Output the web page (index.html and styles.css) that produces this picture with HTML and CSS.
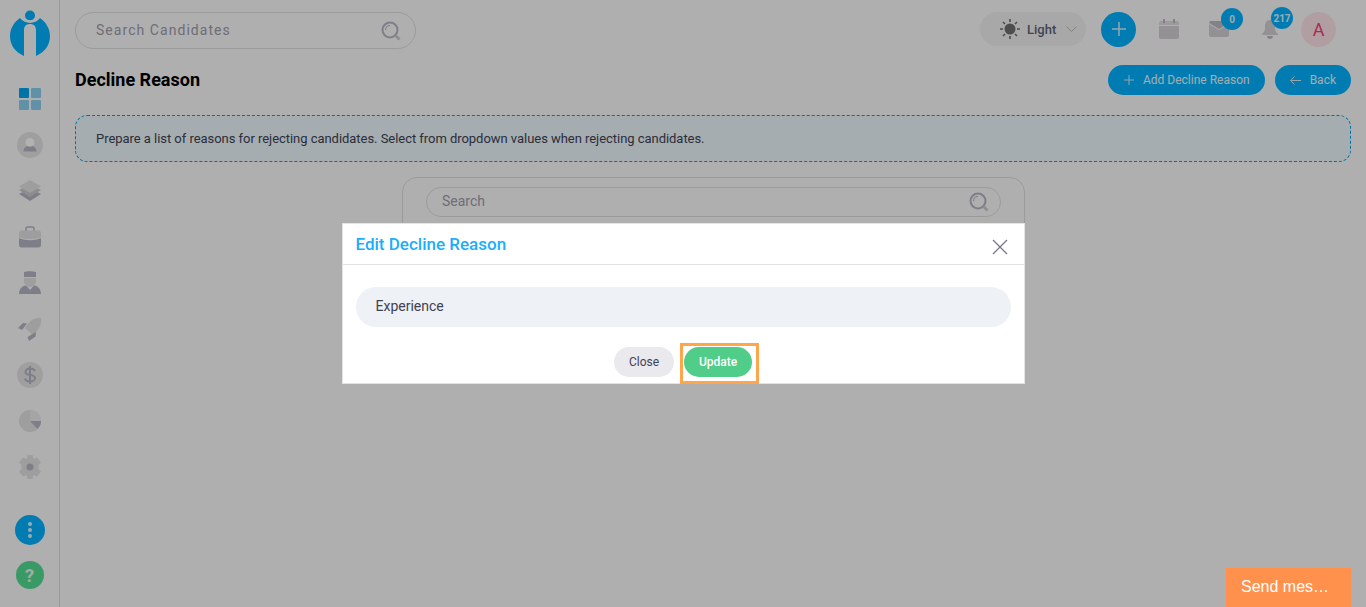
FILE: index.html
```html
<!DOCTYPE html>
<html lang="en">
<head>
  <meta charset="UTF-8" />
  <title>Decline Reason</title>
  <link rel="stylesheet" href="styles.css">
</head>
<body>
  <div class="app">
    <aside class="sidebar">
      <svg class="logo" width="40" height="46" viewBox="0 0 40 46">
        <path fill="#00b2ff" d="M10 8 C14 14 25 15 30 8 C36 12 40 19 40 26 C40 35 35 42 26 46 L26 20 C26 16 23.500 14 20 14 C16.500 14 14 16 14 20 L14 46 C5 42 0 35 0 26 C0 19 4 12 10 8 Z"/>
        <circle cx="20" cy="5.500" r="5" fill="#00b2ff"/>
        <path fill="none" stroke="#fbfbfb" stroke-width="1.500" d="M13 8 C17 12 23 12 27 8"/>
      </svg>
      <nav class="nav">
        <a class="nav-item">
          <svg width="24" height="24" viewBox="0 0 24 24">
            <rect x="1" y="1" width="10" height="10" rx="1" fill="#00a7ee"/>
            <rect x="13" y="1" width="10" height="10" rx="1" fill="#8cd0ee"/>
            <rect x="1" y="13" width="10" height="10" rx="1" fill="#8cd0ee"/>
            <rect x="13" y="13" width="10" height="10" rx="1" fill="#8cd0ee"/>
          </svg>
        </a>
        <a class="nav-item">
          <svg width="26" height="26" viewBox="0 0 26 26">
            <circle cx="13" cy="13" r="13" fill="#e4e4e4"/>
            <circle cx="13" cy="10.500" r="4.500" fill="#fff"/>
            <path fill="#b5b5c5" d="M6.500 19.500 C6.500 16 9 14.500 10.500 14 C12 15 14 15 15.500 14 C17 14.500 19.500 16 19.500 19.500 Z"/>
          </svg>
        </a>
        <a class="nav-item">
          <svg width="24" height="24" viewBox="0 0 24 24">
            <path fill="#b5b5c5" d="M1 15 L5 13 L12 16 L19 13 L23 15 L12 22 Z"/>
            <path fill="#cacad0" d="M1 11 L5 9 L12 12 L19 9 L23 11 L12 18 Z"/>
            <path fill="#e2e2e2" d="M1 7.500 L12 1 L23 7.500 L12 14 Z"/>
          </svg>
        </a>
        <a class="nav-item">
          <svg width="24" height="24" viewBox="0 0 24 24">
            <path fill="none" stroke="#b5b5c5" stroke-width="1.500" d="M8 6 V3.500 C8 2.500 9 2 10 2 H14 C15 2 16 2.500 16 3.500 V6"/>
            <path fill="#e2e2e2" d="M1 8 C1 6.500 2 5.500 3.500 5.500 H20.500 C22 5.500 23 6.500 23 8 V12 C16 15 8 15 1 12 Z"/>
            <path fill="#b5b5c5" d="M1 13 C8 16 16 16 23 13 V20 C23 21.500 22 22.500 20.500 22.500 H3.500 C2 22.500 1 21.500 1 20 Z"/>
          </svg>
        </a>
        <a class="nav-item">
          <svg width="24" height="24" viewBox="0 0 24 24">
            <path fill="#e2e2e2" d="M6 7 H18 V10 C18 13 15 16 12 16 C9 16 6 13 6 10 Z"/>
            <path fill="#b5b5c5" d="M6 1 C9 0 15 0 18 1 V6 H6 Z"/>
            <path fill="#b5b5c5" d="M1 23 C1 18 4 15 8 14.500 L12 19 L16 14.500 C20 15 23 18 23 23 Z"/>
          </svg>
        </a>
        <a class="nav-item">
          <svg width="24" height="24" viewBox="0 0 24 24">
            <path fill="#e2e2e2" d="M23 1 C24 7 21 13 15 18 L7 11 C11 4 17 0 23 1 Z"/>
            <path fill="#b5b5c5" d="M5 6 L9 6.500 L4 13 L0 11 Z"/>
            <path fill="#b5b5c5" d="M18 15 L17.500 19.500 L11 24 L9.500 20 Z"/>
          </svg>
        </a>
        <a class="nav-item">
          <svg width="26" height="26" viewBox="0 0 26 26">
            <circle cx="13" cy="13" r="13" fill="#e4e4e4"/>
            <path fill="none" stroke="#b5b5c5" stroke-width="2" d="M18 9 C17 7 15 6.500 13 6.500 C10.500 6.500 8.500 8 8.500 10 C8.500 14.500 18 11.500 18 16 C18 18 15.500 19.500 13 19.500 C10.500 19.500 8.500 18.500 8 16.500 M13 4 V22"/>
          </svg>
        </a>
        <a class="nav-item">
          <svg width="22" height="22" viewBox="0 0 22 22">
            <circle cx="11" cy="11" r="11" fill="#e2e2e2"/>
            <path fill="#b5b5c5" d="M11 11 H22 C22 14 21 16.500 18.500 19 Z"/>
            <path fill="#ececec" d="M11 0 C17 0 22 5 22 11 H11 Z"/>
          </svg>
        </a>
        <a class="nav-item">
          <svg width="26" height="26" viewBox="0 0 26 26">
            <path fill="#e2e2e2" d="M10.500 1 H15.500 L16.500 5 L20 3.500 L24 8.500 L21.500 11 V15 L24 17.500 L20 22.500 L16.500 21 L15.500 25 H10.500 L9.500 21 L6 22.500 L2 17.500 L4.500 15 V11 L2 8.500 L6 3.500 L9.500 5 Z"/>
            <circle cx="13" cy="13" r="3.500" fill="#b5b5c5"/>
          </svg>
        </a>
      </nav>
      <div class="side-bottom">
        <a class="round-btn more"><span></span><span></span><span></span></a>
        <a class="round-btn help">?</a>
      </div>
    </aside>

    <main class="main">
      <header class="topbar">
        <div class="search-box top-search">
          <span class="search-text">Search Candidates</span>
          <svg class="search-icon" width="20" height="20" viewBox="0 0 20 20">
            <circle cx="9" cy="9" r="7.500" fill="none" stroke="#b5b5c5" stroke-width="2"/>
            <path fill="none" stroke="#b5b5c5" stroke-width="1.200" d="M4.500 9 C4.500 6.500 6.500 4.500 9 4.500"/>
            <path stroke="#ccc" stroke-width="3" d="M14.500 14.500 L18.500 18.500"/>
          </svg>
        </div>
        <div class="top-actions">
          <div class="theme-pill">
            <svg width="20" height="20" viewBox="0 0 20 20">
              <circle cx="10" cy="10" r="5.500" fill="#6f6f6f"/>
              <path stroke="#6f6f6f" stroke-width="1.600" d="M10 0 V3 M10 17 V20 M0 10 H3 M17 10 H20 M3 3 L5 5 M15 15 L17 17 M3 17 L5 15 M15 5 L17 3"/>
            </svg>
            <span class="theme-label">Light</span>
            <svg width="11" height="6" viewBox="0 0 11 6"><path fill="none" stroke="#bbb" d="M0.500 0.500 L5.500 5.500 L10.500 0.500"/></svg>
          </div>
          <a class="add-circle">
            <svg width="16" height="16" viewBox="0 0 16 16"><path stroke="#d6eefb" stroke-width="1.500" d="M8 1 V15 M1 8 H15"/></svg>
          </a>
          <a class="top-icon cal">
            <svg width="20" height="20" viewBox="0 0 20 20">
              <path fill="#e0dde0" d="M0 6 V4 C0 3 1 2 2 2 H18 C19 2 20 3 20 4 V6 Z"/>
              <path fill="#d4d0d6" d="M0 7 H20 V18 C20 19 19 20 18 20 H2 C1 20 0 19 0 18 Z"/>
              <path stroke="#aaa6b0" stroke-width="1.500" d="M5 0 V4 M15 0 V4"/>
            </svg>
          </a>
          <a class="top-icon mail">
            <svg width="20" height="16" viewBox="0 0 20 16">
              <path fill="#d4d0d6" d="M0 3 L10 9 L20 3 V14 C20 15 19 16 18 16 H2 C1 16 0 15 0 14 Z"/>
              <path fill="#bdb9c2" d="M1 0 H19 L20 2 L10 8 L0 2 Z"/>
            </svg>
            <span class="badge">0</span>
          </a>
          <a class="top-icon bell">
            <svg width="16" height="20" viewBox="0 0 16 20">
              <path fill="#d4d0d6" d="M8 1 C12 1 13 4 13 8 C13 12 14 13 16 15 V16 H0 V15 C2 13 3 12 3 8 C3 4 4 1 8 1 Z"/>
              <path fill="#bdb9c2" d="M5 17 H11 C11 19 9.500 20 8 20 C6.500 20 5 19 5 17 Z"/>
            </svg>
            <span class="badge">217</span>
          </a>
          <div class="avatar">A</div>
        </div>
      </header>

      <div class="page-head">
        <h1 class="page-title">Decline Reason</h1>
        <div class="page-actions">
          <a class="btn-blue btn-add">
            <svg width="10" height="10" viewBox="0 0 10 10"><path stroke="#d6eefb" d="M5 0 V10 M0 5 H10"/></svg>
            Add Decline Reason
          </a>
          <a class="btn-blue">
            <svg width="11" height="9" viewBox="0 0 11 9"><path fill="none" stroke="#d6eefb" d="M4.500 0.500 L0.700 4.500 L4.500 8.500 M0.700 4.500 H11"/></svg>
            Back
          </a>
        </div>
      </div>

      <div class="notice">Prepare a list of reasons for rejecting candidates. Select from dropdown values when rejecting candidates.</div>

      <section class="list-card">
        <div class="search-box card-search">
          <span class="search-text">Search</span>
          <svg class="search-icon" width="20" height="20" viewBox="0 0 20 20">
            <circle cx="9" cy="9" r="7.500" fill="none" stroke="#b5b5c5" stroke-width="2"/>
            <path fill="none" stroke="#b5b5c5" stroke-width="1.200" d="M4.500 9 C4.500 6.500 6.500 4.500 9 4.500"/>
            <path stroke="#ccc" stroke-width="3" d="M14.500 14.500 L18.500 18.500"/>
          </svg>
        </div>
      </section>
    </main>
  </div>

  <div class="overlay">
    <div class="modal">
      <div class="modal-head">
        <h2 class="modal-title">Edit Decline Reason</h2>
        <svg class="modal-x" width="16" height="16" viewBox="0 0 16 16"><path stroke="#77778a" stroke-width="1.300" d="M1 1 L15 15 M15 1 L1 15"/></svg>
      </div>
      <div class="modal-body">
        <div class="reason-input">Experience</div>
      </div>
      <div class="modal-foot">
        <a class="btn-close">Close</a>
        <span class="highlight"><a class="btn-update">Update</a></span>
      </div>
    </div>
  </div>

  <div class="chat-tab">Send mes…</div>
</body>
</html>
```

FILE: styles.css
```css
* {
  box-sizing: border-box;
}

body {
  margin: 0;
  height: 607px;
  overflow: hidden;
  background: #fbfbfb;
  font-family: Roboto, "Liberation Sans", sans-serif;
  color: #3f4254;
}

.app {
  display: flex;
  height: 607px;
}

/* sidebar */
.sidebar {
  width: 60px;
  flex-shrink: 0;
  display: flex;
  flex-direction: column;
  align-items: center;
  background: #fbfbfb;
  border-right: 1px solid #dcdcdc;
  padding-top: 10px;
}

.logo {
  display: block;
}

.nav {
  display: flex;
  flex-direction: column;
  align-items: center;
  margin-top: 20px;
}

.nav-item {
  height: 46px;
  width: 46px;
  display: flex;
  align-items: center;
  justify-content: center;
}

.side-bottom {
  display: flex;
  flex-direction: column;
  align-items: center;
  gap: 16px;
  margin-top: 25px;
}

.round-btn {
  display: flex;
  align-items: center;
  justify-content: center;
  border-radius: 50%;
}

.more {
  width: 30px;
  height: 30px;
  flex-direction: column;
  gap: 2px;
  background: #00b2ff;
}

.more span {
  width: 4px;
  height: 4px;
  border-radius: 50%;
  background: #dff3fd;
}

.help {
  width: 28px;
  height: 28px;
  background: #54dd93;
  color: #e6f8ee;
  font-size: 18px;
  font-weight: 700;
}

/* main column */
.main {
  flex: 1;
  min-width: 0;
  padding: 10px 15px 0;
}

.topbar {
  display: flex;
  align-items: center;
  justify-content: space-between;
  height: 38px;
}

.search-box {
  display: flex;
  align-items: center;
  justify-content: space-between;
  border: 1px solid #dedede;
  border-radius: 20px;
}

.top-search {
  width: 341px;
  height: 37px;
  padding: 0 14px 0 20px;
  margin-top: 3px;
}

.top-search .search-text {
  font-size: 14px;
  letter-spacing: 1.050px;
  padding-bottom: 2px;
}

.search-text {
  color: #9d9dad;
}

.top-actions {
  display: flex;
  align-items: center;
  padding-right: 15px;
}

.theme-pill {
  width: 106px;
  height: 34px;
  display: flex;
  align-items: center;
  padding-left: 20px;
  border-radius: 17px;
  background: #f1f1f1;
  margin-right: 15px;
}

.theme-label {
  font-size: 13px;
  font-weight: 500;
  color: #5e6278;
  margin: 0 10px 0 7px;
}

.add-circle {
  width: 35px;
  height: 35px;
  display: flex;
  align-items: center;
  justify-content: center;
  border-radius: 50%;
  background: #00b2ff;
  margin-right: 23px;
}

.top-icon {
  position: relative;
  display: flex;
}

.cal {
  margin-right: 30px;
}

.mail {
  margin-right: 33px;
}

.bell {
  margin-right: 23px;
}

.badge {
  position: absolute;
  top: -13px;
  left: 12px;
  min-width: 22px;
  height: 22px;
  display: flex;
  align-items: center;
  justify-content: center;
  border-radius: 50%;
  background: #00b2ff;
  color: #e3f5fd;
  font-size: 10px;
  font-weight: 700;
}

.bell .badge {
  top: -12px;
  left: 9px;
}

.avatar {
  width: 35px;
  height: 35px;
  display: flex;
  align-items: center;
  justify-content: center;
  border-radius: 50%;
  background: #fde3ea;
  color: #f1416c;
  font-size: 18px;
}

.page-head {
  display: flex;
  align-items: center;
  justify-content: space-between;
  height: 30px;
  margin-top: 17px;
}

.page-title {
  margin: 0;
  padding-bottom: 2px;
  font-size: 18px;
  font-weight: 700;
  color: #000;
}

.page-actions {
  display: flex;
  gap: 10px;
}

.btn-blue {
  height: 30px;
  display: flex;
  align-items: center;
  gap: 9px;
  padding: 0 15px;
  border-radius: 15px;
  background: #00b2ff;
  color: #eaf8fe;
  font-size: 12px;
}

.btn-add {
  padding-left: 16px;
}

.notice {
  height: 47px;
  display: flex;
  align-items: center;
  margin-top: 20px;
  padding-left: 20px;
  border: 1px dashed #00a3ef;
  border-radius: 12px;
  background: #ecf8fc;
  color: #3f4254;
  font-size: 13px;
  letter-spacing: -.04px;
}

.list-card {
  width: 623px;
  height: 150px;
  margin: 15px 0 0 327px;
  padding: 9px 23px;
  border: 1px solid #dedede;
  border-radius: 15px;
}

.card-search {
  height: 30px;
  padding: 0 11px 0 15px;
  font-size: 14px;
}

.card-search .search-text {
  padding-bottom: 2px;
}

/* modal */
.overlay {
  position: fixed;
  top: 0;
  left: 0;
  width: 100%;
  height: 100%;
  background: rgba(0, 0, 0, .3);
  padding-top: 223px;
}

.modal {
  width: 683px;
  height: 161px;
  margin: 0 auto;
  background: #fff;
  border: 1px solid #e4e4e4;
}

.modal-head {
  height: 41px;
  display: flex;
  align-items: center;
  justify-content: space-between;
  padding: 0 16px 0 13px;
  border-bottom: 1px solid #e4e4e4;
}

.modal-title {
  margin: 0;
  font-size: 17px;
  font-weight: 500;
  color: #1aaefb;
}

.modal-x {
  margin-top: 6px;
}

.modal-body {
  padding: 22px 13px 0;
}

.reason-input {
  height: 40px;
  display: flex;
  align-items: center;
  padding: 0 0 2px 20px;
  border-radius: 20px;
  background: #eef1f5;
  color: #3f4254;
  font-size: 14px;
}

.modal-foot {
  display: flex;
  justify-content: center;
  align-items: flex-start;
  margin-top: 20px;
  padding-left: 6px;
}

.btn-close,
.btn-update {
  height: 30px;
  display: flex;
  align-items: center;
  justify-content: center;
  padding-left: 1px;
  border-radius: 15px;
  font-size: 12px;
}

.btn-close {
  width: 60px;
  background: #e9e9ee;
  color: #3f4254;
  margin-right: 6px;
}

.highlight {
  display: flex;
  margin-top: -4px;
  padding: 1px 4px 4px 1px;
  border: 3px solid #ffa64d;
}

.btn-update {
  width: 68px;
  background: #50cd89;
  color: #fff;
  font-weight: 500;
}

.chat-tab {
  position: fixed;
  right: 15px;
  bottom: 0;
  width: 125px;
  height: 39px;
  display: flex;
  align-items: center;
  padding: 0 0 2px 15px;
  background: #ff914d;
  color: #fff;
  font-family: "Liberation Sans", Arial, sans-serif;
  font-size: 16px;
}
```
